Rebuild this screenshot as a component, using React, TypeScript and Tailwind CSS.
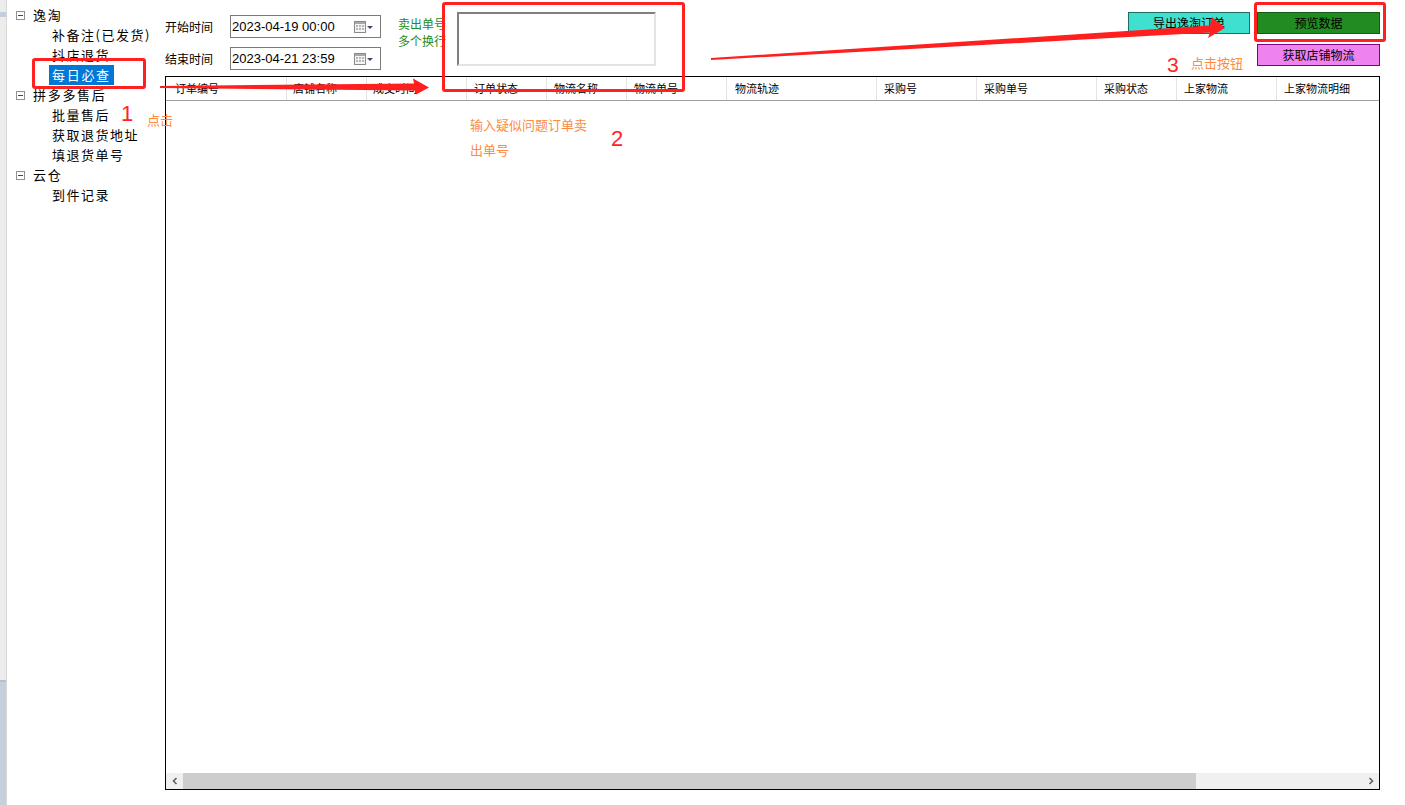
import React from "react";

const cn = '"Noto Sans CJK SC", "Liberation Sans", sans-serif';

const columns = [
  { title: "订单编号", cls: "w-[121px] pl-[9px]" },
  { title: "店铺名称", cls: "w-[80px] pl-[6px]" },
  { title: "成交时间", cls: "w-[100px] pl-[6px]" },
  { title: "订单状态", cls: "w-[80px] pl-[7px]" },
  { title: "物流名称", cls: "w-[80px] pl-[7px]" },
  { title: "物流单号", cls: "w-[100px] pl-[7px]" },
  { title: "物流轨迹", cls: "w-[150px] pl-[8px]" },
  { title: "采购号", cls: "w-[100px] pl-[7px]" },
  { title: "采购单号", cls: "w-[120px] pl-[7px]" },
  { title: "采购状态", cls: "w-[80px] pl-[7px]" },
  { title: "上家物流", cls: "w-[100px] pl-[7px]" },
  { title: "上家物流明细", cls: "w-[120px] pl-[7px]" },
];

const tree = [
  { title: "逸淘", children: ["补备注(已发货)", "抖店退货", "每日必查"] },
  { title: "拼多多售后", children: ["批量售后", "获取退货地址", "填退货单号"] },
  { title: "云仓", children: ["到件记录"] },
];

function MinusBox() {
  return (
    <div className="w-[9px] h-[9px] border border-[#919191] bg-white flex items-center justify-center shrink-0">
      <div className="w-[5px] h-[1px] bg-[#2a4a9a]" />
    </div>
  );
}

function DateBox({ value }: { value: string }) {
  return (
    <div className="w-[151px] h-[23px] border border-[#7a7a7a] bg-white flex items-center pl-[1px] pr-[6px] shrink-0">
      <span className="flex-1 text-[13px] text-black whitespace-nowrap" style={{ fontFamily: '"Liberation Sans", sans-serif' }}>
        {value}
      </span>
      <svg width="20" height="14" viewBox="0 0 20 14">
        <rect x="0.5" y="1.5" width="11" height="11" fill="#f4f4f4" stroke="#8a8a8a" />
        <rect x="1" y="2" width="10" height="2" fill="#a8a8a8" />
        <g fill="#b8b8b8">
          <rect x="2" y="5" width="2" height="2" />
          <rect x="5" y="5" width="2" height="2" />
          <rect x="8" y="5" width="2" height="2" />
          <rect x="2" y="8" width="2" height="2" />
          <rect x="5" y="8" width="2" height="2" />
          <rect x="8" y="8" width="2" height="2" />
        </g>
        <polygon points="13,6 19,6 16,9" fill="#3b4a6b" />
      </svg>
    </div>
  );
}

function Chevron({ dir }: { dir: "left" | "right" }) {
  return (
    <svg width="8" height="8" viewBox="0 0 8 8">
      <polyline
        points={dir === "left" ? "5.5,1 2.5,4 5.5,7" : "2.5,1 5.5,4 2.5,7"}
        fill="none"
        stroke="#606060"
        strokeWidth="1.6"
      />
    </svg>
  );
}

export default function App() {
  return (
    <div className="relative w-[1405px] h-[805px] bg-white flex overflow-hidden" style={{ fontFamily: cn }}>
      {/* left edge strip */}
      <div className="w-[7px] shrink-0 flex flex-col border-r border-[#d6d6d6]">
        <div className="h-[12px] bg-[#ececec]" />
        <div className="h-[5px] bg-[#c3cedc]" />
        <div className="flex-1 bg-[#ececec]" />
        <div className="h-[125px] bg-[#c6cfdc] border-t-2 border-[#b4bfcf]" />
      </div>

      {/* tree */}
      <div className="w-[158px] shrink-0 pt-[5px] pl-[9px]">
        {tree.map((node) => (
          <div key={node.title}>
            <div className="h-[20px] flex items-center gap-[8px]">
              <MinusBox />
              <span className="text-[13px] tracking-[1.7px] text-black whitespace-nowrap">{node.title}</span>
            </div>
            {node.children.map((child) => (
              <div key={child} className="h-[20px] flex items-center pl-[33px]">
                <span
                  className={
                    child === "每日必查"
                      ? "h-[20px] flex items-center px-[3px] bg-[#0078d7] text-white text-[13px] tracking-[1.7px] whitespace-nowrap"
                      : "px-[3px] text-black text-[13px] tracking-[1.5px] whitespace-nowrap"
                  }
                >
                  {child}
                </span>
              </div>
            ))}
          </div>
        ))}
      </div>

      {/* main */}
      <div className="flex-1 min-w-0 flex flex-col">
        <div className="h-[76px] flex shrink-0">
          <div className="pt-[15px] flex flex-col gap-[9px] shrink-0">
            <div className="h-[23px] flex items-center">
              <span className="w-[65px] text-[12px] text-black whitespace-nowrap">开始时间</span>
              <DateBox value="2023-04-19 00:00" />
            </div>
            <div className="h-[23px] flex items-center">
              <span className="w-[65px] text-[12px] text-black whitespace-nowrap">结束时间</span>
              <DateBox value="2023-04-21 23:59" />
            </div>
          </div>
          <div className="ml-[17px] pt-[15px] text-[12px] leading-[17px] text-[#228b22] w-[48px] shrink-0 whitespace-nowrap">
            <div>卖出单号</div>
            <div>多个换行</div>
          </div>
          <div className="ml-[11px] mt-[12px] w-[199px] h-[54px] shrink-0 bg-white border-2 border-t-[#7f7f7f] border-l-[#7f7f7f] border-r-[#e3e3e3] border-b-[#e3e3e3]" />
          <div className="flex-1" />
          <button className="mt-[12px] w-[122px] h-[22px] shrink-0 bg-[#40e0d0] border border-[#1e6e66] text-[12px] text-black flex items-center justify-center">
            导出逸淘订单
          </button>
          <div className="ml-[7px] mr-[25px] mt-[12px] flex flex-col gap-[10px] shrink-0">
            <button className="w-[123px] h-[22px] bg-[#228b22] border border-[#155d15] text-[12px] text-black flex items-center justify-center">
              预览数据
            </button>
            <button className="w-[123px] h-[22px] bg-[#ee82ee] border border-[#800080] text-[12px] text-black flex items-center justify-center">
              获取店铺物流
            </button>
          </div>
        </div>

        {/* grid */}
        <div className="mr-[25px] mb-[15px] flex-1 border border-black flex flex-col bg-white">
          <div className="h-[24px] flex border-b border-[#a0a0a0] overflow-hidden shrink-0">
            {columns.map((c) => (
              <div
                key={c.title}
                className={`${c.cls} shrink-0 h-full flex items-center border-r border-[#e3e3e3] text-[11px] text-black whitespace-nowrap`}
              >
                {c.title}
              </div>
            ))}
          </div>
          <div className="flex-1" />
          <div className="h-[16px] flex bg-[#f0f0f0] shrink-0">
            <div className="w-[17px] flex items-center justify-center">
              <Chevron dir="left" />
            </div>
            <div className="w-[1013px] bg-[#cdcdcd]" />
            <div className="flex-1" />
            <div className="w-[17px] flex items-center justify-center">
              <Chevron dir="right" />
            </div>
          </div>
        </div>
      </div>

      {/* annotations */}
      <svg className="absolute inset-0 pointer-events-none" width="1405" height="805" viewBox="0 0 1405 805">
        <polygon
          points="160,86 414,83.5 413,78.5 429,87.5 416,94.5 415,90.5 160,88"
          fill="#ff1f1f"
        />
        <polygon
          points="711,58 1210,25.5 1212,17 1225,28 1208,38 1210,32.5 711,60"
          fill="#ff1f1f"
        />
      </svg>
      <div className="absolute left-[32px] top-[58px] w-[114px] h-[31px] border-[3px] border-[#ff2020] rounded-[3px] pointer-events-none" />
      <div className="absolute left-[442px] top-[2px] w-[243px] h-[90px] border-[3px] border-[#ff2020] rounded-[3px] pointer-events-none" />
      <div className="absolute left-[1254px] top-[2px] w-[132px] h-[40px] border-[3px] border-[#ff2020] rounded-[3px] pointer-events-none" />

      <div
        className="absolute left-[121px] top-[103px] text-[22px] leading-[22px] text-[#ff2424]"
        style={{ fontFamily: '"Liberation Sans", sans-serif' }}
      >
        1
      </div>
      <div className="absolute left-[147px] top-[111px] text-[13px] leading-[17px] text-[#ff8a3d]">点击</div>

      <div className="absolute left-[470px] top-[112px] w-[119px] text-[13px] leading-[25px] text-[#ff8a3d]">
        输入疑似问题订单卖出单号
      </div>
      <div
        className="absolute left-[611px] top-[128px] text-[22px] leading-[22px] text-[#ff2424]"
        style={{ fontFamily: '"Liberation Sans", sans-serif' }}
      >
        2
      </div>

      <div
        className="absolute left-[1167px] top-[54px] text-[21px] leading-[21px] text-[#ff2424]"
        style={{ fontFamily: '"Liberation Sans", sans-serif' }}
      >
        3
      </div>
      <div className="absolute left-[1191px] top-[54px] text-[13px] leading-[17px] text-[#ff8a3d] whitespace-nowrap">点击按钮</div>
    </div>
  );
}
